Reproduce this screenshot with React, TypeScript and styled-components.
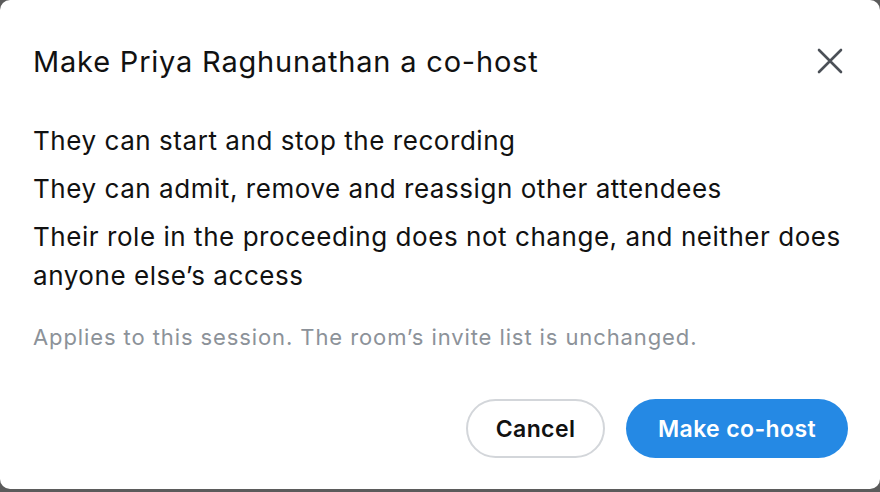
import React from "react";
import styled, {createGlobalStyle} from "styled-components";

const GlobalStyle = createGlobalStyle`
  html, body {
    margin: 0;
    padding: 0;
    background: #5b5b5b;
  }
  body {
    font-family: Inter, "Noto Sans", "Liberation Sans", sans-serif;
    -webkit-font-smoothing: antialiased;
  }
`

const points = [
    "They can start and stop the recording",
    "They can admit, remove and reassign other attendees",
    "Their role in the proceeding does not change, and neither does anyone else\u2019s access",
]

export default function App(): JSX.Element {
    return (
        <>
            <GlobalStyle/>
            <Dialog role="dialog" aria-labelledby="cohost-title">
                <Header>
                    <Title id="cohost-title">Make Priya Raghunathan a co-host</Title>
                    <CloseButton aria-label="Close">
                        <svg width="26" height="26" viewBox="0 0 26 26" fill="none">
                            <path d="M2 2L24 24M24 2L2 24" stroke="#4b5057" strokeWidth="2.6" strokeLinecap="round"/>
                        </svg>
                    </CloseButton>
                </Header>
                <PointList>
                    {points.map((p) => (
                        <Point key={p}>{p}</Point>
                    ))}
                </PointList>
                <Note>Applies to this session. The room’s invite list is unchanged.</Note>
                <Actions>
                    <Button>Cancel</Button>
                    <Button primary>Make co-host</Button>
                </Actions>
            </Dialog>
        </>
    )
}

const Dialog = styled.div`
  box-sizing: border-box;
  width: 880px;
  height: 489px;
  background: #fff;
  border-radius: 10px;
  padding: 38px 32px 0 33px;
  display: flex;
  flex-direction: column;
  color: #111;
`
const Header = styled.div`
  display: flex;
  align-items: center;
  justify-content: space-between;
  height: 46px;
`
const Title = styled.h2`
  margin: 0;
  font-size: 29px;
  font-weight: 400;
  letter-spacing: 0.8px;
  color: #111;
`
const CloseButton = styled.button`
  border: none;
  background: none;
  padding: 0;
  margin-right: 5px;
  display: flex;
  cursor: pointer;
`
const PointList = styled.ul`
  list-style: none;
  margin: 37px 0 0 0;
  padding: 0;
  display: flex;
  flex-direction: column;
  gap: 9px;
`
const Point = styled.li`
  font-size: 26px;
  line-height: 39px;
  letter-spacing: 0.55px;
  color: #111;
  max-width: 815px;
`
const Note = styled.p`
  margin: 27px 0 0 0;
  font-size: 22px;
  line-height: 30px;
  letter-spacing: 0.9px;
  color: #8c9299;
`
const Actions = styled.div`
  display: flex;
  justify-content: flex-end;
  gap: 21px;
  margin-top: 47px;
`
const Button = styled.button<{ primary?: boolean }>`
  box-sizing: border-box;
  height: 59px;
  padding: 0;
  border-radius: 30px;
  font-family: inherit;
  font-size: 23px;
  font-weight: 600;
  letter-spacing: 0.4px;
  cursor: pointer;
  border: ${p => p.primary ? "none" : "2px solid #d3d6da"};
  background: ${p => p.primary ? "#2589e4" : "#fff"};
  color: ${p => p.primary ? "#fff" : "#111"};
  width: ${p => p.primary ? "222px" : "139px"};
`
